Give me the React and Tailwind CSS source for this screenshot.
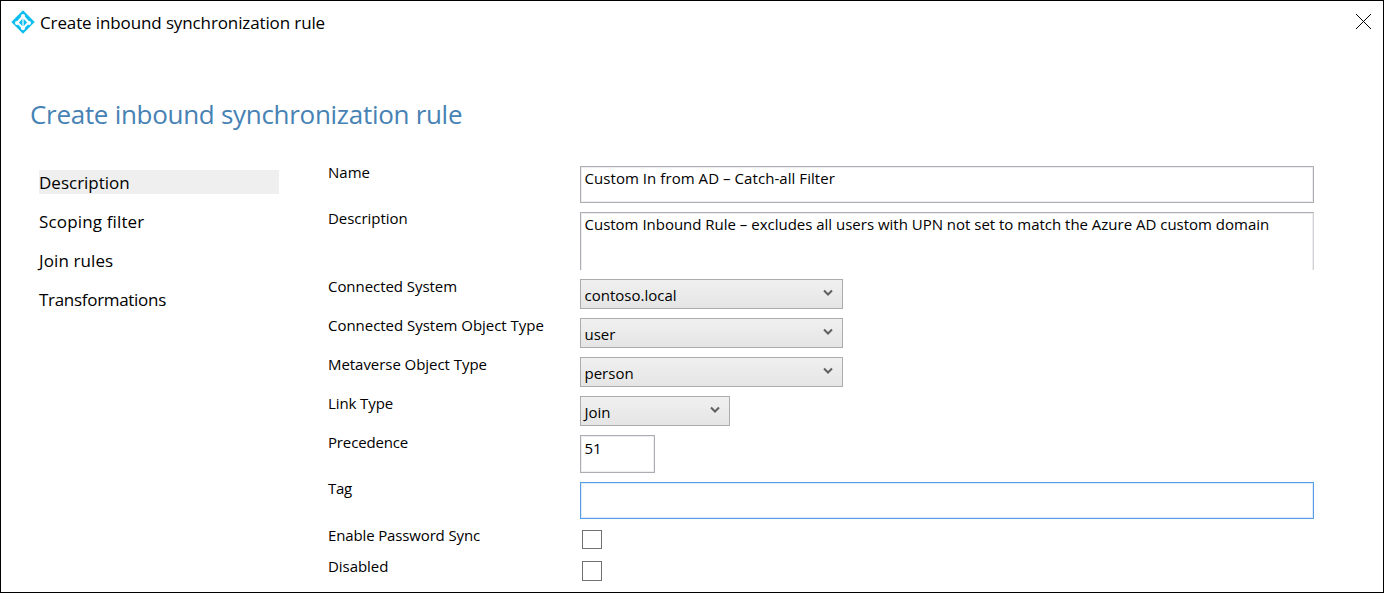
const NAV = [
  { label: "Description", style: "bg-[#efefef]" },
  { label: "Scoping filter", style: "tracking-[0.15px]" },
  { label: "Join rules", style: "tracking-[0.1px]" },
  { label: "Transformations", style: "tracking-[-0.3px]" },
];

function SyncIcon() {
  return (
    <svg width="24" height="24" viewBox="0 0 24 24">
      <path d="M12 0.3 23.7 12 12 23.7 0.3 12Z" fill="#0dbdf0" />
      <path d="M12 4.5 19 12.5 12 19.5 5 12.5Z" fill="#fff" />
      <circle cx="12" cy="5.8" r="1.9" fill="#fff" />
      <circle cx="5.9" cy="13" r="1.9" fill="#fff" />
      <circle cx="18.1" cy="13" r="1.9" fill="#fff" />
      <circle cx="12" cy="18.3" r="1.9" fill="#fff" />
      <path d="M11.4 8.8V16.2L7.9 12.5ZM12.6 8.8V16.2L16.1 12.5Z" fill="#0dbdf0" />
    </svg>
  );
}

function Row({ label, height, labelStyle = "", children }) {
  return (
    <div className={`flex items-start ${height}`}>
      <div className={`w-[252px] shrink-0 ${labelStyle}`}>{label}</div>
      {children}
    </div>
  );
}

function Field({ className, children }) {
  return (
    <div className={`border border-[#abadb3] bg-white px-[3.5px] ${className}`}>{children}</div>
  );
}

function Select({ width, value }) {
  return (
    <div
      className={`mt-[3px] flex h-[30px] items-start justify-between border border-[#acacac] bg-linear-to-b from-[#f0f0f0] to-[#e5e5e5] pt-[5px] pr-[9px] pl-[3.5px] ${width}`}
    >
      <span>{value}</span>
      <svg className="mt-[4px]" width="10" height="8" viewBox="0 0 10 8">
        <path d="M1 1.5 5 5.5 9 1.5" fill="none" stroke="#606060" strokeWidth="2" />
      </svg>
    </div>
  );
}

function Checkbox({ height }) {
  return (
    <div className={`mt-[5px] ml-[2px] w-[20px] border border-[#707070] bg-white ${height}`} />
  );
}

export default function App() {
  return (
    <div className="flex h-[593px] w-[1384px] flex-col overflow-hidden border border-black bg-white font-['Open_Sans','Noto_Sans',sans-serif] text-black">
      <header className="flex h-[95px] shrink-0 items-start pt-[8.5px] pr-[11px] pl-[10px]">
        <SyncIcon />
        <span className="mt-[1.5px] ml-[5px] text-[17px] leading-[24px] tracking-[-0.12px]">
          Create inbound synchronization rule
        </span>
        <svg className="mt-[3.5px] ml-auto" width="17" height="17" viewBox="0 0 17 17">
          <path d="M1 1 16 16M16 1 1 16" stroke="#000" strokeWidth="1" />
        </svg>
      </header>
      <h1 className="h-[66px] shrink-0 pl-[29px] text-[26px] leading-[36px] tracking-[-0.29px] text-[#4682b4]">
        Create inbound synchronization rule
      </h1>
      <main className="flex">
        <nav className="mt-[8px] ml-[38px] flex w-[240px] flex-col gap-[15px] text-[17px] leading-[26px]">
          {NAV.map((item) => (
            <div key={item.label} className={`h-[24px] ${item.style}`}>
              {item.label}
            </div>
          ))}
        </nav>
        <section className="ml-[49px] text-[15px] leading-[20px]">
          <Row label="Name" height="h-[46px]">
            <Field className="mt-[4px] h-[37px] w-[734px] pt-px tracking-[0.06px] shadow-[inset_0_0_0_1px_#eeeef0]">
              Custom In from AD – Catch-all Filter
            </Field>
          </Row>
          <Row label="Description" height="h-[68px]" labelStyle="tracking-[-0.05px]">
            <Field className="mt-[4px] h-[58px] w-[734px] border-r-[#d0d1d4] border-b-0 pt-px tracking-[-0.01px] shadow-[inset_1px_1px_0_0_#eeeef0,inset_-1px_0_0_0_#eeeef0]">
              Custom Inbound Rule – excludes all users with UPN not set to match the Azure AD custom
              domain
            </Field>
          </Row>
          <Row label="Connected System" height="h-[39px]" labelStyle="tracking-[-0.05px]">
            <Select width="w-[263px]" value="contoso.local" />
          </Row>
          <Row
            label="Connected System Object Type"
            height="h-[39px]"
            labelStyle="tracking-[-0.03px]"
          >
            <Select width="w-[263px]" value="user" />
          </Row>
          <Row label="Metaverse Object Type" height="h-[39px]" labelStyle="tracking-[-0.05px]">
            <Select width="w-[263px]" value="person" />
          </Row>
          <Row label="Link Type" height="h-[39px]" labelStyle="tracking-[-0.1px]">
            <Select width="w-[150px]" value="Join" />
          </Row>
          <Row label="Precedence" height="h-[46px]" labelStyle="tracking-[-0.15px]">
            <Field className="mt-[3px] h-[38px] w-[75px] pt-[2px] shadow-[inset_0_0_0_1px_#eeeef0]">
              51
            </Field>
          </Row>
          <Row label="Tag" height="h-[47px]" labelStyle="tracking-[-0.3px]">
            <div className="mt-[4px] h-[37px] w-[734px] border border-[#569de5] bg-white shadow-[inset_0_0_0_1px_#ddebfa]" />
          </Row>
          <Row label="Enable Password Sync" height="h-[31px]" labelStyle="tracking-[-0.14px]">
            <Checkbox height="h-[19px]" />
          </Row>
          <Row label="Disabled" height="h-[31px]" labelStyle="tracking-[-0.05px]">
            <Checkbox height="h-[20px]" />
          </Row>
        </section>
      </main>
    </div>
  );
}
